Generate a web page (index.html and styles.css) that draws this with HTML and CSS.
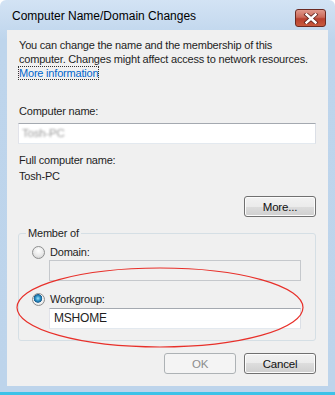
FILE: index.html
```html
<!DOCTYPE html>
<html lang="en">
<head>
    <meta charset="UTF-8">
    <title>Computer Name/Domain Changes</title>
    <link rel="stylesheet" href="styles.css">
</head>
<body>
    <div class="window">
        <div class="titlebar">
            <span class="title">Computer Name/Domain Changes</span>
            <div class="close-btn">
                <svg width="16" height="11" viewBox="0 0 16 11">
                    <path d="M3.5 1.5 L12.5 9.5 M12.5 1.5 L3.5 9.5" stroke="#5a1e18" stroke-width="4" stroke-linecap="square"/>
                    <path d="M3.5 1.5 L12.5 9.5 M12.5 1.5 L3.5 9.5" stroke="#ffffff" stroke-width="2.5" stroke-linecap="square"/>
                </svg>
            </div>
        </div>

        <div class="content">
            <p class="intro">
                You can change the name and the membership of this
                computer. Changes might affect access to network resources.
                <br><a href="#" class="link">More information</a>
            </p>

            <div class="label label-name">Computer name:</div>
            <div class="textbox"><span class="blurred">Tosh-PC</span></div>

            <div class="label label-full">Full computer name:</div>
            <div class="label label-value">Tosh-PC</div>

            <div class="more-row">
                <button class="btn">More...</button>
            </div>

            <fieldset class="group">
                <legend>Member of</legend>
                <label class="radio-row">
                    <span class="radio"></span>
                    Domain:
                </label>
                <div class="textbox sub disabled"></div>
                <label class="radio-row radio-row-second">
                    <span class="radio checked"></span>
                    Workgroup:
                </label>
                <div class="textbox sub workgroup">MSHOME</div>
            </fieldset>

            <div class="actions">
                <button class="btn" disabled>OK</button>
                <button class="btn">Cancel</button>
            </div>
        </div>

        <!-- red highlight drawn over the workgroup option -->
        <svg class="highlight" width="335" height="395" viewBox="0 0 335 395">
            <ellipse cx="160" cy="307.5" rx="143" ry="39.5" fill="none" stroke="#e8302a" stroke-width="1.2"/>
        </svg>
    </div>
</body>
</html>
```

FILE: styles.css
```css
body {
    margin: 0;
    font-family: "Liberation Sans", Arial, sans-serif;
    font-size: 11px;
    color: #1e1e1e;
}
.window {
    position: relative;
    width: 335px;
    height: 395px;
    box-sizing: border-box;
    background: linear-gradient(#d3e3f4, #bed5ec 40px, #bdd4eb);
    border-bottom: 3px solid #3cc2e8;
    border-radius: 6px 6px 0 0;
    display: flex;
    flex-direction: column;
}
.titlebar {
    height: 30px;
    display: flex;
    align-items: flex-start;
    justify-content: space-between;
    padding: 0 9px 0 12px;
}
.title {
    font-size: 12px;
    color: #000;
    margin-top: 9px;
}
.close-btn {
    width: 29px;
    height: 16px;
    margin-top: 9px;
    border: 1px solid #6b2a22;
    border-radius: 3px;
    background: linear-gradient(#e1998c, #cb6a5a 45%, #b8402f 55%, #c85a3e);
    display: flex;
    align-items: center;
    justify-content: center;
}
.close-btn svg {
    display: block;
}
.content {
    margin: 0 7px;
    height: 356px;
    background: #f0f0f0;
    box-sizing: border-box;
    padding: 8px 12px 0 11px;
    letter-spacing: -0.2px;
}
.intro {
    margin: 0 0 0 1px;
    line-height: 14px;
}
.link {
    color: #0066cc;
    text-decoration: none;
    outline: 1px dotted #333;
}
.label {
    line-height: 14px;
    padding-left: 1px;
}
.label-name {
    margin-top: 24px;
}
.label-full {
    margin-top: 9px;
}
.label-value {
    margin-top: 2px;
}
.textbox {
    height: 21px;
    box-sizing: border-box;
    margin-top: 5px;
    background: #fff;
    border: 1px solid #abadb3;
    border-top-color: #a4a9b0;
    border-left-color: #e2e3ea;
    border-right-color: #dbdfe6;
    border-bottom-color: #e3e9ef;
    padding: 3px 3px;
    line-height: 13px;
    font-size: 11.5px;
}
.blurred {
    color: #9a9a9a;
    filter: blur(1.2px);
}
.more-row {
    display: flex;
    justify-content: flex-end;
    margin-top: 13px;
}
.btn {
    width: 72px;
    height: 21px;
    box-sizing: border-box;
    border: 1px solid #707070;
    border-radius: 3px;
    background: linear-gradient(#f2f2f2, #ebebeb 50%, #dddddd 50%, #cfcfcf);
    font-family: inherit;
    font-size: 11.5px;
    letter-spacing: -0.2px;
    color: #111;
    padding: 0;
    box-shadow: inset 0 0 0 1px #fcfcfc;
}
.btn:disabled {
    border-color: #adb2b5;
    background: #f4f4f4;
    color: #8d8d8d;
    box-shadow: none;
}
.group {
    margin: 9px 0 0 0;
    padding: 5px 14px 11px 12px;
    border: 1px solid #d5dfe5;
    border-radius: 3px;
}
.group legend {
    padding: 0 2px;
    margin-left: -5px;
    line-height: 14px;
}
.radio-row {
    display: flex;
    align-items: center;
    height: 14px;
    margin-left: 1px;
    gap: 5px;
}
.radio-row-second {
    margin-top: 11px;
}
.radio {
    width: 11px;
    height: 11px;
    border-radius: 50%;
    border: 1px solid #8e8f8f;
    background: radial-gradient(circle at 50% 35%, #ffffff, #e8e8e8 55%, #c9c9c9);
    box-sizing: content-box;
}
.radio.checked {
    background: radial-gradient(circle at 45% 40%, #9ee4fb 0, #2a8fc6 2.5px, #1b5f8f 4px, #f4f4f4 4.6px, #dcdcdc);
}
.textbox.sub {
    margin: 1px 0 0 18px;
}
.textbox.workgroup {
    margin-top: 2px;
    font-size: 12px;
    padding-left: 4px;
}
.textbox.disabled {
    background: #f0f0f0;
    border-color: #c5c8cc;
}
.actions {
    display: flex;
    justify-content: flex-end;
    gap: 8px;
    margin-top: 12px;
}
.highlight {
    position: absolute;
    left: 0;
    top: 0;
    pointer-events: none;
}
```
